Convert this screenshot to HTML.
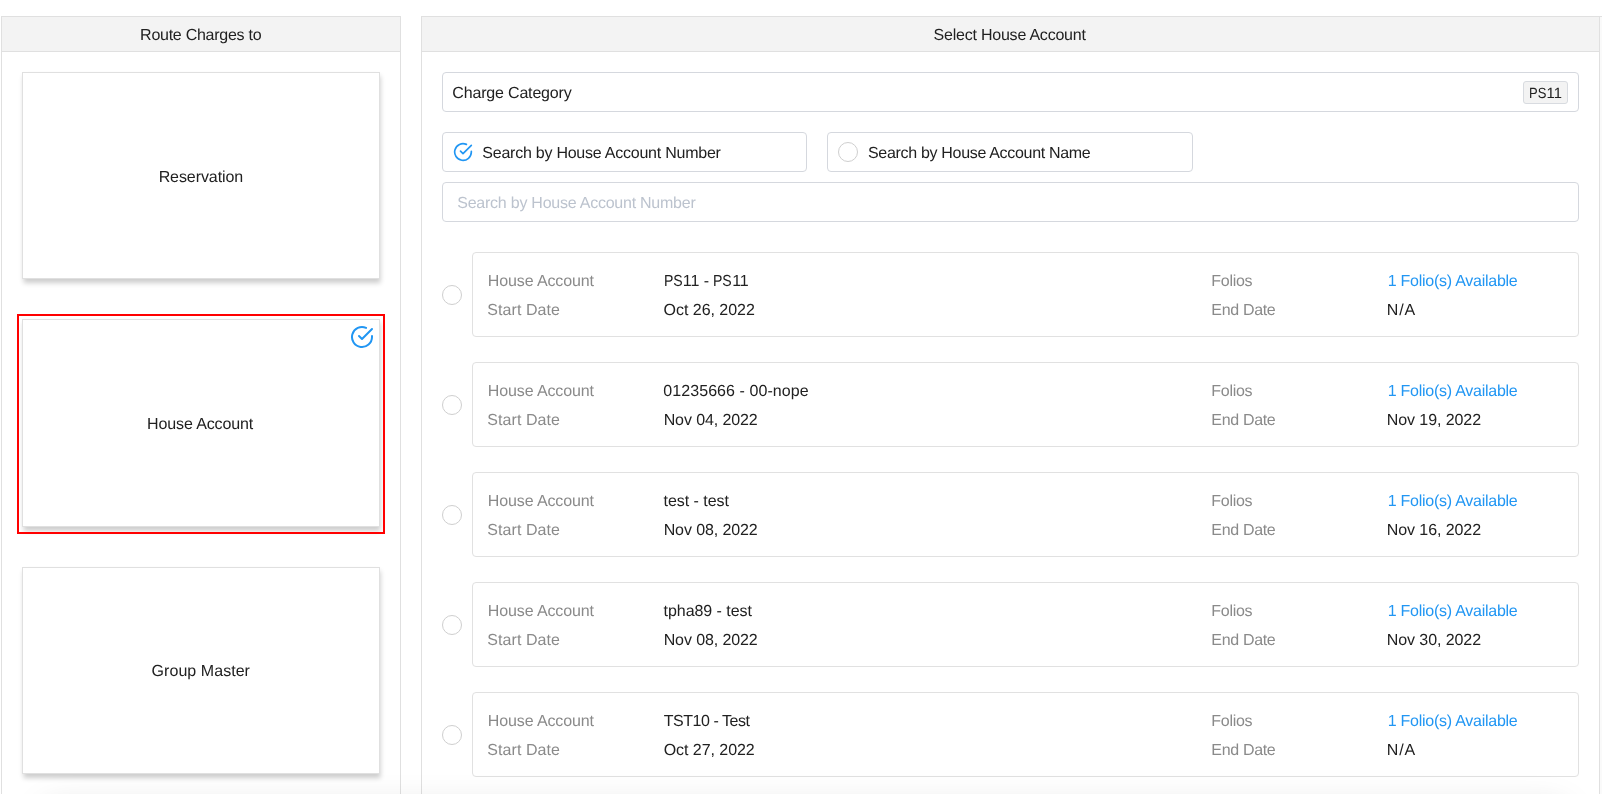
<!DOCTYPE html>
<html lang="en">
<head>
<meta charset="utf-8">
<title>Route Charges</title>
<style>
*{box-sizing:border-box;margin:0;padding:0}
html,body{width:1602px;height:794px;overflow:hidden;background:#fff}
body{font-family:"Liberation Sans",sans-serif;font-size:16px;color:#212121;position:relative;text-rendering:geometricPrecision}
#app{position:absolute;left:0;top:0;width:1602px;height:794px;overflow:hidden;will-change:transform}
.tx{position:absolute;white-space:nowrap;line-height:20px;font-size:16px}
.panel{position:absolute;top:16px;height:800px;border:1px solid #e0e0e0;background:#fff}
.panel-l{left:1px;width:400px}
.panel-r{left:421px;width:1179px}
.phead{position:absolute;left:0;top:0;right:0;height:35px;background:#f3f3f3;border-bottom:1px solid #e0e0e0}
.card{position:absolute;left:20px;width:358px;height:207px;background:#fff;border:1px solid #e0e0e0;
 box-shadow:.5px 4px 5px 0 rgba(0,0,0,.2)}
.hl{position:absolute;left:15px;top:297px;width:368px;height:220px;border:2px solid #ff0000;pointer-events:none}
.tick{position:absolute}
.box{position:absolute;height:40px;border:1px solid #d5d8de;border-radius:4px;background:#fff}
.badge{position:absolute;left:1080px;top:8px;width:45px;height:23px;border:1px solid #d8dbe0;border-radius:3px;background:#f3f3f3}
.badge .tx{font-size:14.8px}
.radio{position:absolute;width:20px;height:20px;border:1px solid #cfcfcf;border-radius:50%;background:#fff}
.row{position:absolute;left:50px;width:1107px;height:85px;border:1px solid #e1e1e1;border-radius:4px;background:#fff}
.nx{display:inline-block;transform:scaleX(.88);transform-origin:0 50%;margin-right:-.16em}
.lab{color:#8a8a8a}
.lnk{color:#2196f3}
.ph{color:#bcc3ce}
.fade{position:absolute;left:45px;top:808px;width:1520px;height:60px;box-shadow:0 0 35px 0 rgba(0,0,0,.15)}
.edge{position:absolute;left:1600px;top:16px;width:2px;height:778px;border-top:1px solid #e0e0e0;background:#fafafa}
</style>
</head>
<body>
<div id="app">
<div class="panel panel-l">
 <div class="phead"><span id="t1" class="tx" style="left:138.10px;top:8.50px;letter-spacing:-0.261px">Route Charges to</span></div>
 <div class="card" style="top:55px"><span id="t2" class="tx" style="left:135.63px;top:94.50px;letter-spacing:-0.076px">Reservation</span></div>
 <div class="card sel" style="top:302px;height:208px"><span id="t3" class="tx" style="left:124.06px;top:94.50px;letter-spacing:-0.114px">House Account</span><svg class="tick" style="left:326.9px;top:4.8px" width="24" height="24" viewBox="0 0 24 24" fill="none" stroke="#2196f3" stroke-width="2" stroke-linecap="round" stroke-linejoin="round"><path d="M22 11.08V12a10 10 0 1 1-5.93-9.14"/><polyline points="22 4 12 14.01 9 11.01"/></svg></div>
 <div class="card" style="top:550px"><span id="t4" class="tx" style="left:128.61px;top:93.50px;letter-spacing:0.048px">Group Master</span></div>
 <div class="hl"></div>
</div>
<div class="panel panel-r">
 <div class="phead"><span id="t5" class="tx" style="left:511.58px;top:8.50px;letter-spacing:-0.222px">Select House Account</span></div>
 <div class="box" style="left:20px;top:55px;width:1137px"><span id="t6" class="tx" style="left:9.31px;top:10.50px;letter-spacing:-0.173px">Charge Category</span><div class="badge"><span id="t7" class="tx" style="left:5.29px;top:2.20px;letter-spacing:-0.033px"><span class="nx">PS</span>11</span></div></div>
 <div class="box" style="left:20px;top:115px;width:365px"><svg class="tick" style="left:10px;top:9px" width="20" height="20" viewBox="0 0 24 24" fill="none" stroke="#2196f3" stroke-width="2" stroke-linecap="round" stroke-linejoin="round"><path d="M22 11.08V12a10 10 0 1 1-5.93-9.14"/><polyline points="22 4 12 14.01 9 11.01"/></svg><span id="t8" class="tx" style="left:39.29px;top:10.50px;letter-spacing:-0.237px">Search by House Account Number</span></div>
 <div class="box" style="left:405px;top:115px;width:366px"><div class="radio" style="left:10px;top:9px"></div><span id="t9" class="tx" style="left:39.97px;top:10.50px;letter-spacing:-0.313px">Search by House Account Name</span></div>
 <div class="box" style="left:20px;top:165px;width:1137px"><span id="t10" class="tx ph" style="left:14.29px;top:10.50px;letter-spacing:-0.241px">Search by House Account Number</span></div>
 <div class="radio" style="left:20px;top:268px"></div>
 <div class="row" style="top:235px">
  <span id="t11" class="tx lab" style="left:14.87px;top:18.50px;letter-spacing:-0.132px">House Account</span><span id="t12" class="tx" style="left:191.14px;top:18.50px;letter-spacing:-0.049px"><span class="nx">PS</span>11 - <span class="nx">PS</span>11</span><span id="t13" class="tx lab" style="left:738.27px;top:18.50px;letter-spacing:-0.278px">Folios</span><span id="t14" class="tx lnk" style="left:914.75px;top:18.50px;letter-spacing:-0.258px">1 Folio(s) Available</span>
  <span id="t15" class="tx lab" style="left:14.37px;top:47.50px;letter-spacing:0.064px">Start Date</span><span id="t16" class="tx" style="left:190.60px;top:47.50px;letter-spacing:-0.031px">Oct 26, 2022</span><span id="t17" class="tx lab" style="left:738.34px;top:47.50px;letter-spacing:-0.324px">End Date</span><span id="t18" class="tx" style="left:913.86px;top:47.50px;letter-spacing:0.805px">N/A</span>
 </div>
 <div class="radio" style="left:20px;top:378px"></div>
 <div class="row" style="top:345px">
  <span id="t19" class="tx lab" style="left:14.87px;top:18.50px;letter-spacing:-0.132px">House Account</span><span id="t20" class="tx" style="left:190.33px;top:18.50px;letter-spacing:0.065px">01235666 - 00-nope</span><span id="t21" class="tx lab" style="left:738.27px;top:18.50px;letter-spacing:-0.278px">Folios</span><span id="t22" class="tx lnk" style="left:914.75px;top:18.50px;letter-spacing:-0.258px">1 Folio(s) Available</span>
  <span id="t23" class="tx lab" style="left:14.37px;top:47.50px;letter-spacing:0.064px">Start Date</span><span id="t24" class="tx" style="left:190.68px;top:47.50px;letter-spacing:-0.102px">Nov 04, 2022</span><span id="t25" class="tx lab" style="left:738.34px;top:47.50px;letter-spacing:-0.324px">End Date</span><span id="t26" class="tx" style="left:913.75px;top:47.50px;letter-spacing:-0.076px">Nov 19, 2022</span>
 </div>
 <div class="radio" style="left:20px;top:488px"></div>
 <div class="row" style="top:455px">
  <span id="t27" class="tx lab" style="left:14.87px;top:18.50px;letter-spacing:-0.132px">House Account</span><span id="t28" class="tx" style="left:190.55px;top:18.50px;letter-spacing:-0.035px">test - test</span><span id="t29" class="tx lab" style="left:738.27px;top:18.50px;letter-spacing:-0.278px">Folios</span><span id="t30" class="tx lnk" style="left:914.75px;top:18.50px;letter-spacing:-0.258px">1 Folio(s) Available</span>
  <span id="t31" class="tx lab" style="left:14.37px;top:47.50px;letter-spacing:0.064px">Start Date</span><span id="t32" class="tx" style="left:190.63px;top:47.50px;letter-spacing:-0.097px">Nov 08, 2022</span><span id="t33" class="tx lab" style="left:738.34px;top:47.50px;letter-spacing:-0.324px">End Date</span><span id="t34" class="tx" style="left:913.75px;top:47.50px;letter-spacing:-0.076px">Nov 16, 2022</span>
 </div>
 <div class="radio" style="left:20px;top:598px"></div>
 <div class="row" style="top:565px">
  <span id="t35" class="tx lab" style="left:14.87px;top:18.50px;letter-spacing:-0.132px">House Account</span><span id="t36" class="tx" style="left:190.62px;top:18.50px;letter-spacing:-0.055px">tpha89 - test</span><span id="t37" class="tx lab" style="left:738.27px;top:18.50px;letter-spacing:-0.278px">Folios</span><span id="t38" class="tx lnk" style="left:914.75px;top:18.50px;letter-spacing:-0.258px">1 Folio(s) Available</span>
  <span id="t39" class="tx lab" style="left:14.37px;top:47.50px;letter-spacing:0.064px">Start Date</span><span id="t40" class="tx" style="left:190.63px;top:47.50px;letter-spacing:-0.097px">Nov 08, 2022</span><span id="t41" class="tx lab" style="left:738.34px;top:47.50px;letter-spacing:-0.324px">End Date</span><span id="t42" class="tx" style="left:913.75px;top:47.50px;letter-spacing:-0.076px">Nov 30, 2022</span>
 </div>
 <div class="radio" style="left:20px;top:708px"></div>
 <div class="row" style="top:675px">
  <span id="t43" class="tx lab" style="left:14.87px;top:18.50px;letter-spacing:-0.132px">House Account</span><span id="t44" class="tx" style="left:190.80px;top:18.50px;letter-spacing:-0.466px">TST10 - Test</span><span id="t45" class="tx lab" style="left:738.27px;top:18.50px;letter-spacing:-0.278px">Folios</span><span id="t46" class="tx lnk" style="left:914.75px;top:18.50px;letter-spacing:-0.258px">1 Folio(s) Available</span>
  <span id="t47" class="tx lab" style="left:14.37px;top:47.50px;letter-spacing:0.064px">Start Date</span><span id="t48" class="tx" style="left:190.70px;top:47.50px;letter-spacing:-0.050px">Oct 27, 2022</span><span id="t49" class="tx lab" style="left:738.34px;top:47.50px;letter-spacing:-0.324px">End Date</span><span id="t50" class="tx" style="left:913.86px;top:47.50px;letter-spacing:0.805px">N/A</span>
 </div>
</div>
<div class="edge"></div>
<div class="fade"></div>
</div>
</body>
</html>
